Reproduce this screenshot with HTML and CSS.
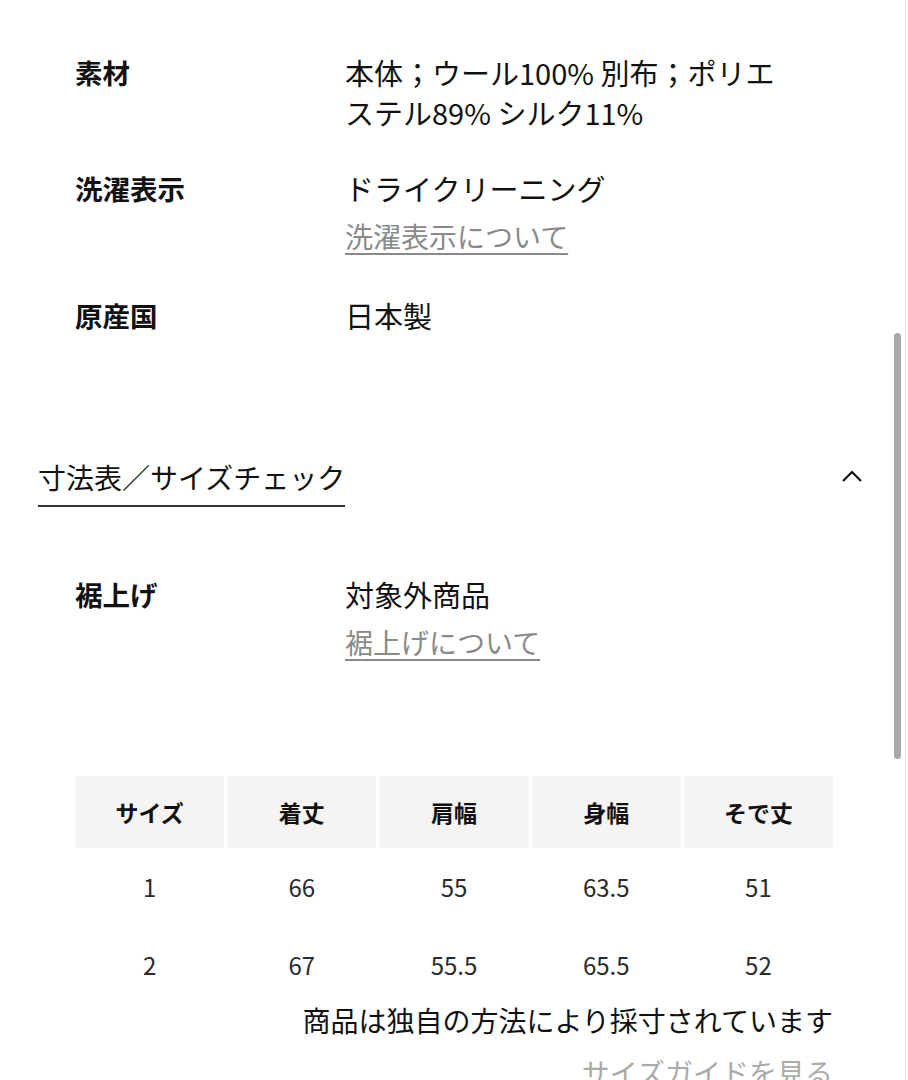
FILE: index.html
```html
<!DOCTYPE html>
<html lang="ja">
<head>
<meta charset="utf-8">
<title>商品詳細</title>
<link rel="stylesheet" href="styles.css">
</head>
<body>
<div class="page">
  <dl class="specs">
    <div class="spec">
      <dt class="spec-label">素材</dt>
      <dd class="spec-value">本体；ウール100% 別布；ポリエステル89% シルク11%</dd>
    </div>
    <div class="spec">
      <dt class="spec-label">洗濯表示</dt>
      <dd class="spec-value">ドライクリーニング<a class="spec-link" href="#">洗濯表示について</a></dd>
    </div>
    <div class="spec">
      <dt class="spec-label">原産国</dt>
      <dd class="spec-value">日本製</dd>
    </div>
  </dl>

  <div class="section-head">
    <span class="section-title">寸法表／サイズチェック</span>
    <svg class="chevron" width="22" height="14" viewBox="0 0 22 14"><path d="M2 12 L11 3 L20 12" fill="none" stroke="#111" stroke-width="2.2"/></svg>
  </div>

  <dl class="specs specs-size">
    <div class="spec">
      <dt class="spec-label">裾上げ</dt>
      <dd class="spec-value">対象外商品<a class="spec-link" href="#">裾上げについて</a></dd>
    </div>
  </dl>

  <div class="size-table">
    <div class="cell head">サイズ</div>
    <div class="cell head">着丈</div>
    <div class="cell head">肩幅</div>
    <div class="cell head">身幅</div>
    <div class="cell head">そで丈</div>
    <div class="cell">1</div>
    <div class="cell">66</div>
    <div class="cell">55</div>
    <div class="cell">63.5</div>
    <div class="cell">51</div>
    <div class="cell">2</div>
    <div class="cell">67</div>
    <div class="cell">55.5</div>
    <div class="cell">65.5</div>
    <div class="cell">52</div>
  </div>
  <p class="note">商品は独自の方法により採寸されています</p>
  <p class="guide"><a href="#">サイズガイドを見る</a></p>
</div>
<div class="scroll-track"></div>
<div class="scroll-thumb"></div>
</body>
</html>
```

FILE: styles.css
```css
html, body {
  margin: 0;
  padding: 0;
  background: #fff;
}
body {
  font-family: "Noto Sans CJK JP", "Noto Sans", sans-serif;
  color: #111;
  font-size: 29px;
  line-height: 40px;
  overflow: hidden;
  height: 1080px;
}
.page {
  padding: 52px 75px 0 38px;
}
.specs {
  margin: 0;
  padding-left: 37px;
  display: flex;
  flex-direction: column;
  gap: 36px;
}
.spec {
  display: grid;
  grid-template-columns: 270px 455px;
}
.spec-label {
  font-weight: 700;
  font-size: 27.5px;
}
.spec-value {
  margin: 0;
  display: flex;
  flex-direction: column;
  word-break: break-all;
}
.spec-link {
  color: #8a8a8a;
  text-decoration: underline;
  text-underline-offset: 5px;
  text-decoration-thickness: 1.5px;
  margin: 8px 0 3px;
  align-self: flex-start;
  font-size: 28px;
}
.section-head {
  margin-top: 122px;
  margin-right: -30px;
  display: flex;
  justify-content: space-between;
  align-items: center;
}
.section-title {
  font-size: 28px;
  padding-bottom: 8px;
  border-bottom: 2px solid #333;
}
.chevron {
  margin-top: -12px;
}
.specs-size {
  margin-top: 67px;
}
.size-table {
  margin: 111px 0 0 37px;
  display: grid;
  grid-template-columns: repeat(5, 1fr);
  column-gap: 3px;
}
.cell {
  height: 78px;
  display: flex;
  align-items: center;
  justify-content: center;
  color: #2a2a2a;
  font-size: 24px;
}
.cell.head {
  height: 72px;
  background: #f5f4f2;
  font-weight: 700;
  color: #111;
  font-size: 23px;
}
.note {
  margin: -2px 0 0;
  text-align: right;
  font-size: 28px;
  line-height: 36px;
}
.guide {
  margin: 16px 0 0;
  text-align: right;
  font-size: 28px;
  line-height: 36px;
}
.guide a {
  color: #aaa;
  text-decoration: underline;
  text-underline-offset: 5px;
}
.scroll-track {
  position: fixed;
  top: 0;
  right: 2px;
  width: 1px;
  height: 100%;
  background: #e4e4e4;
}
.scroll-thumb {
  position: fixed;
  top: 333px;
  right: 7px;
  width: 7px;
  height: 426px;
  border-radius: 4px;
  background: #a8a8a8;
}
```
